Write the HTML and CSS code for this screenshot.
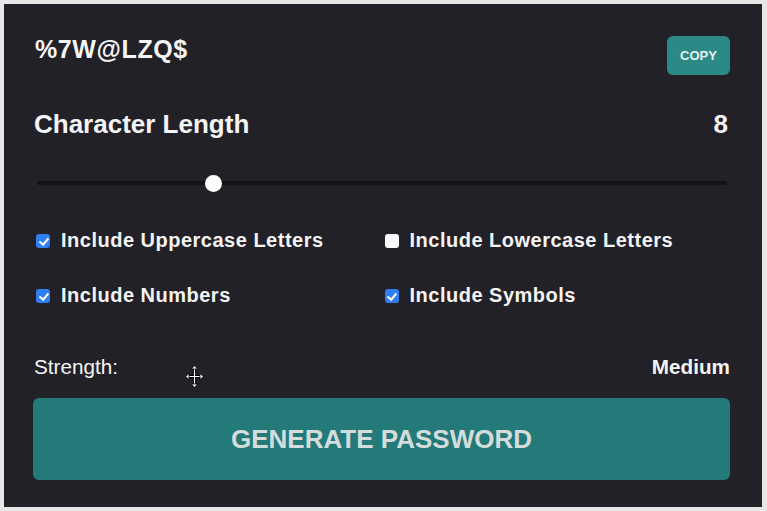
FILE: index.html
```html
<!DOCTYPE html>
<html lang="en">
<head>
<meta charset="utf-8">
<title>Password Generator</title>
<link rel="stylesheet" href="styles.css">
</head>
<body>
<main class="panel">
  <div class="header">
    <div class="password">%7W@LZQ$</div>
    <button class="copy">COPY</button>
  </div>
  <div class="length-row">
    <span>Character Length</span>
    <span>8</span>
  </div>
  <input class="slider" type="range" min="4" max="20" value="8">
  <div class="options">
    <label class="option"><input type="checkbox" checked><span>Include Uppercase Letters</span></label>
    <label class="option"><input type="checkbox"><span>Include Lowercase Letters</span></label>
    <label class="option"><input type="checkbox" checked><span>Include Numbers</span></label>
    <label class="option"><input type="checkbox" checked><span>Include Symbols</span></label>
  </div>
  <div class="strength">
    <span class="strength-label">Strength:</span>
    <span class="strength-value">Medium</span>
  </div>
  <button class="generate">GENERATE PASSWORD</button>
  <svg class="cursor" width="19" height="23" viewBox="0 0 19 23" aria-hidden="true">
    <path d="M9.5 3v17M3 11.5h13" stroke="#000" stroke-width="3.2" fill="none"/>
    <path d="M9.5 3v17M3 11.5h13" stroke="#fff" stroke-width="1.2" fill="none"/>
    <g fill="#fff" stroke="#000" stroke-width="0.8" stroke-linejoin="round">
      <path d="M9.5 0.6l3 3.4h-6z"/>
      <path d="M9.5 22.4l3-3.4h-6z"/>
      <path d="M0.6 11.5l3.4-3v6z"/>
      <path d="M18.4 11.5l-3.4-3v6z"/>
    </g>
  </svg>
</main>
</body>
</html>
```

FILE: styles.css
```css
html, body {
  margin: 0;
  padding: 0;
}
body {
  background: #e7e7e7;
  font-family: "Liberation Sans", Arial, Helvetica, sans-serif;
  color: #f4f4f4;
  padding: 4px 5px 4px 4px;
}
.panel {
  position: relative;
  background: #222127;
  padding: 30px 32px 27px 29px;
  display: flex;
  flex-direction: column;
}
.header {
  display: flex;
  justify-content: space-between;
  align-items: flex-start;
}
.password {
  font-size: 25px;
  font-weight: 700;
  line-height: 30px;
  letter-spacing: 0.6px;
  padding-left: 2px;
}
.copy {
  margin-top: 2px;
  width: 63px;
  height: 39px;
  border: none;
  border-radius: 6px;
  background: #2b8a86;
  color: #e6f2f1;
  font-family: "Liberation Sans", Arial, sans-serif;
  font-weight: 700;
  font-size: 13px;
  padding: 0;
}
.length-row {
  margin-top: 34px;
  display: flex;
  justify-content: space-between;
  font-size: 26px;
  font-weight: 700;
  line-height: 30px;
  padding: 0 2px 0 1px;
}
.slider {
  -webkit-appearance: none;
  appearance: none;
  margin: 36px 3px 0 4px;
  height: 16px;
  background: transparent;
}
.slider::-webkit-slider-runnable-track {
  height: 4px;
  background: #131316;
  border-radius: 2px;
}
.slider::-webkit-slider-thumb {
  -webkit-appearance: none;
  appearance: none;
  width: 17px;
  height: 17px;
  border-radius: 50%;
  background: #fff;
  margin-top: -6px;
  border: none;
}
.options {
  margin-top: 37px;
  display: grid;
  grid-template-columns: 1fr 1fr;
  row-gap: 31px;
}
.option {
  display: flex;
  align-items: center;
  gap: 11px;
  font-size: 20px;
  font-weight: 700;
  line-height: 24px;
  letter-spacing: 0.5px;
}
.option input {
  -webkit-appearance: none;
  appearance: none;
  position: relative;
  margin: 0 0 0 3px;
  width: 14px;
  height: 14px;
  border-radius: 3px;
  background: #fbfbfb;
  flex: none;
  top: 1px;
}
.option input:checked {
  background: #2f7ef3;
}
.option input:checked::after {
  content: "";
  position: absolute;
  left: 4.5px;
  top: 1.5px;
  width: 3.5px;
  height: 7px;
  border: solid #fff;
  border-width: 0 2px 2px 0;
  transform: rotate(40deg);
}
.strength {
  margin-top: 48px;
  display: flex;
  justify-content: space-between;
  font-size: 20.7px;
  line-height: 24px;
  padding-left: 1px;
}
.strength-value {
  font-weight: 700;
}
.generate {
  margin-top: 19px;
  height: 82px;
  border: none;
  border-radius: 6px;
  background: #247a78;
  color: #d4dddc;
  font-family: "Liberation Sans", Arial, sans-serif;
  font-weight: 700;
  font-size: 26px;
  padding: 0;
}
.cursor {
  position: absolute;
  left: 181px;
  top: 361px;
}
```
